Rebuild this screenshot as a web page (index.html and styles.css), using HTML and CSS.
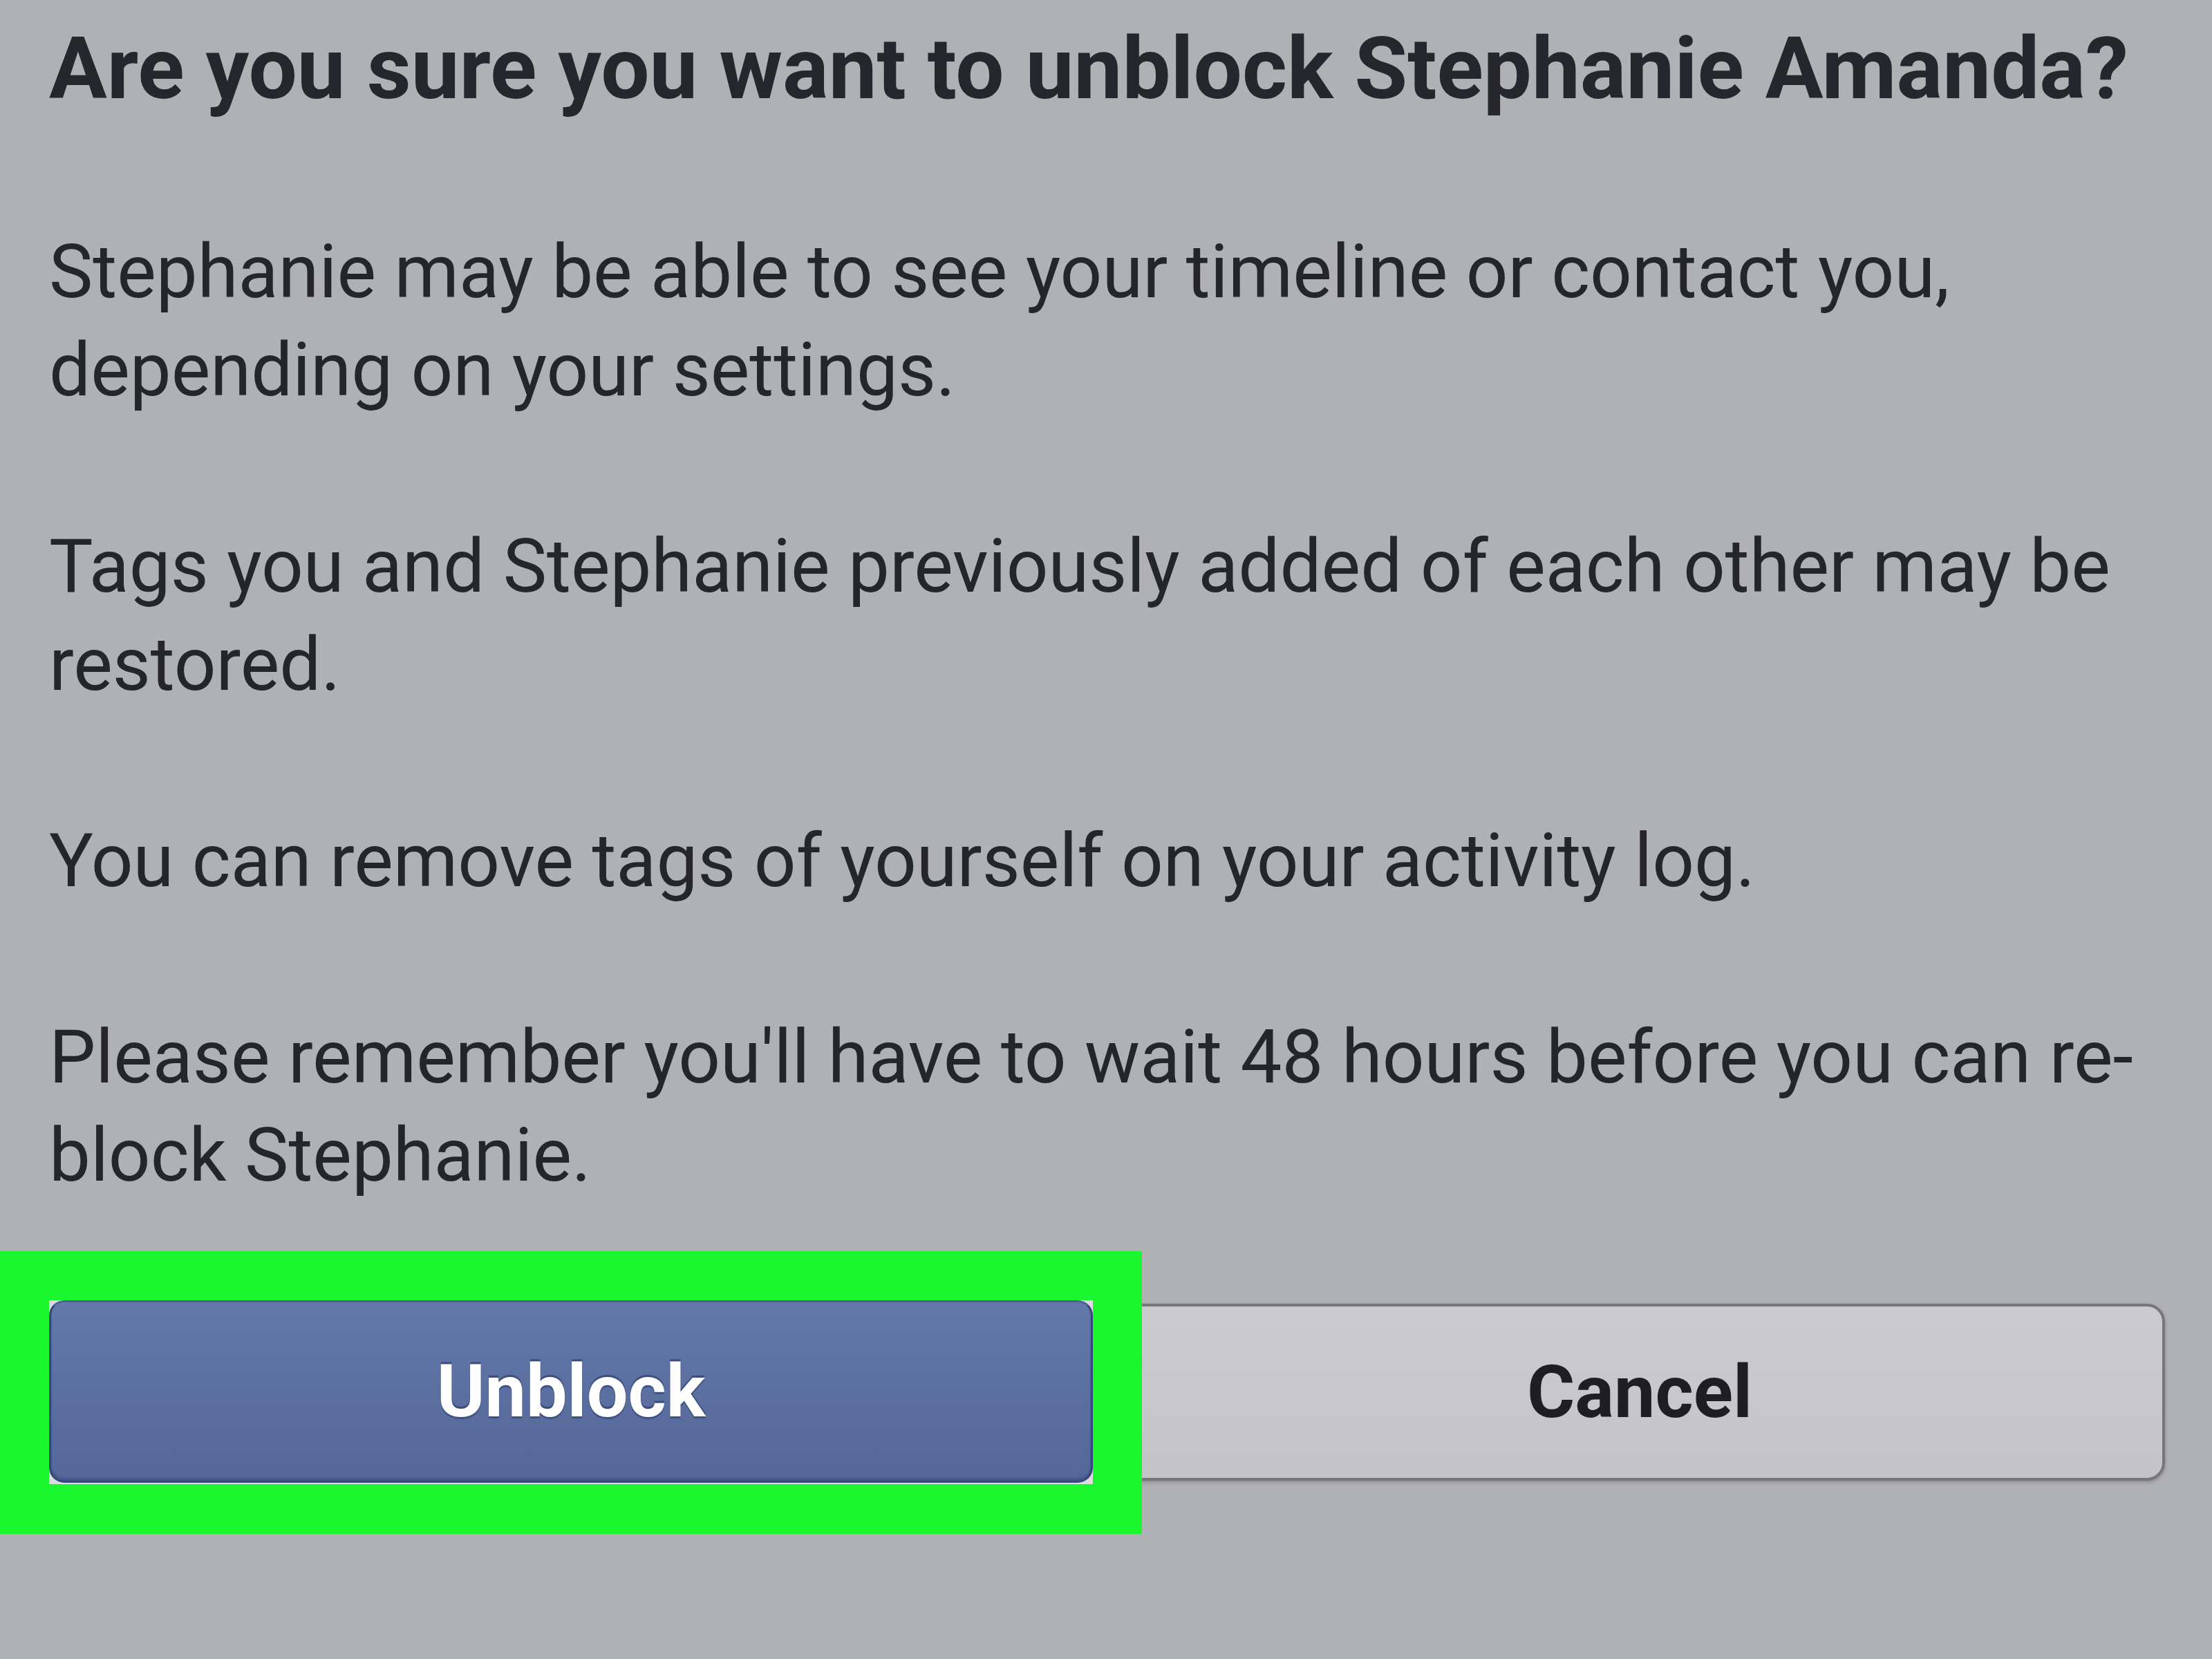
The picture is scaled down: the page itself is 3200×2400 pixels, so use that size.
FILE: index.html
```html
<!DOCTYPE html>
<html lang="en">
<head>
<meta charset="utf-8">
<title>Unblock Stephanie Amanda</title>
<link rel="stylesheet" href="styles.css">
</head>
<body>
<main class="dialog">
  <h1 class="title">Are you sure you want to unblock Stephanie Amanda?</h1>
  <div class="body">
    <p>Stephanie may be able to see your timeline or contact you, depending on your settings.</p>
    <p>Tags you and Stephanie previously added of each other may be restored.</p>
    <p>You can remove tags of yourself on your activity log.</p>
    <p>Please remember you'll have to wait 48 hours before you can re-block Stephanie.</p>
  </div>
  <div class="actions">
    <div class="primary-wrap">
      <button class="btn btn-primary" type="button">Unblock</button>
    </div>
    <button class="btn btn-secondary" type="button">Cancel</button>
  </div>
</main>
</body>
</html>
```
FILE: styles.css
```css
html, body {
  margin: 0;
  padding: 0;
  background: #b0b1b5;
}

body {
  width: 3200px;
  height: 2400px;
  overflow: hidden;
  font-family: Roboto, "Liberation Sans", Arial, sans-serif;
  color: #222428;
}

.dialog {
  padding: 24px 68px 0 71px;
}

.title {
  margin: 0;
  font-size: 124.7px;
  line-height: 150px;
  font-weight: 700;
  color: #25272c;
  white-space: nowrap;
}

.body {
  margin-top: 149px;
}

.body p {
  margin: 0 0 142px 0;
  font-size: 106.7px;
  line-height: 142px;
  font-weight: 400;
  color: #24262a;
}

.body p:last-child {
  margin-bottom: 0;
}

.actions {
  margin-top: 138px;
  display: flex;
  align-items: center;
  gap: 31px;
}

.primary-wrap {
  position: relative;
  flex: 0 0 1510px;
  height: 266px;
  background: #dcdce0;
}

.primary-wrap::after {
  content: "";
  position: absolute;
  left: -71px;
  top: -71px;
  right: -71px;
  bottom: -72px;
  border: 71px solid #1af72e;
  border-bottom-width: 72px;
  pointer-events: none;
}

.btn {
  font-family: Roboto, "Liberation Sans", Arial, sans-serif;
  font-weight: 700;
  font-size: 106px;
  cursor: pointer;
  margin: 0;
  padding: 0;
}

.btn-primary {
  width: 100%;
  height: 264px;
  display: block;
  border: 3px solid #34467a;
  border-top-color: #4d6194;
  border-radius: 22px;
  background: linear-gradient(#6279aa, #5a6f9f 55%, #54699a);
  color: #ffffff;
  text-shadow: 0 -3px 1px rgba(30, 45, 95, 0.55), 0 3px 1px rgba(30, 45, 95, 0.45);
  box-shadow: inset 0 -4px 3px rgba(40, 55, 100, 0.35);
}

.btn-secondary {
  flex: 1 1 auto;
  height: 256px;
  border: 4px solid #76777c;
  border-radius: 26px;
  background: linear-gradient(#cbcbcd, #c7c7c9 60%, #c4c4c6);
  color: #1d1f23;
  box-shadow: 0 2px 5px rgba(80, 80, 85, 0.45);
}
```
